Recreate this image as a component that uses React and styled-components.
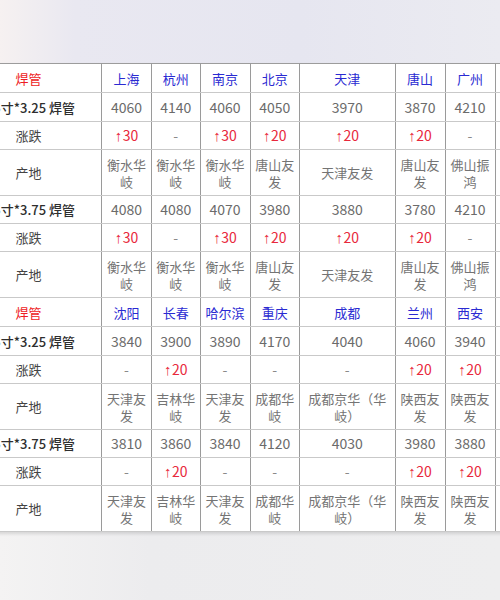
import React from "react";
import styled, { createGlobalStyle } from "styled-components";

const GlobalStyle = createGlobalStyle`
  html, body {
    margin: 0;
    padding: 0;
  }
  body {
    font-family: "Noto Sans CJK SC", "Noto Sans", sans-serif;
  }
`;

const Page = styled.div`
  width: 500px;
  height: 600px;
  overflow: hidden;
  display: flex;
  flex-direction: column;
  background: linear-gradient(90deg, #f4f3f3 0%, #ececee 30%, #eeeeef 100%);
`;

const Banner = styled.div`
  height: 63px;
  flex: none;
  background: linear-gradient(90deg, #f6f1f1 0%, #e9e8f1 15%, #e6e6f0 60%, #ebebf1 100%);
`;

const TableWrap = styled.div`
  flex: none;
  margin-left: -45px;
  box-shadow: 0 2px 3px rgba(0, 0, 0, 0.12);
  width: fit-content;
`;

const Table = styled.table`
  border-collapse: collapse;
  table-layout: fixed;
  background: #fff;
  border-top: 1px solid #9c9c9c;
  border-bottom: 1px solid #707070;
`;

const Row = styled.tr`
  height: ${p => p.$h}px;
`;

const Cell = styled.td`
  padding: 0 3px;
  text-align: center;
  vertical-align: middle;
  border-left: 1px solid #9a9a9a;
  border-right: 1px solid #9a9a9a;
  border-bottom: 1px solid #c9c9c9;
  font-size: 13px;
  line-height: 17px;
  color: #6a6a6a;
  overflow: hidden;
`;

const Label = styled(Cell)`
  color: ${p => (p.$strong ? "#2e2e2e" : "#444")};
  font-weight: ${p => (p.$strong ? 500 : 400)};
  white-space: nowrap;
`;

const Corner = styled(Cell)`
  color: #ee1c24;
  font-size: 13px;
`;

const City = styled(Cell)`
  color: #2a2ad2;
  white-space: nowrap;
`;

const Price = styled(Cell)`
  font-size: 14px;
  color: #6b6b6b;
`;

const Change = styled(Cell)`
  font-size: 14px;
  color: ${p => (p.$up ? "#e8283c" : "#8a8a8a")};
`;

const Arrow = styled.span`
  font-family: "Liberation Sans", sans-serif;
  font-size: 15px;
  margin-right: 0.5px;
`;

const Origin = styled(Cell)`
  color: #747474;
`;

const widths = [146, 50, 48.5, 50, 49.5, 95.5, 50, 50, 50];

const blocks = [
  {
    cities: ["上海", "杭州", "南京", "北京", "天津", "唐山", "广州", "武汉"],
    specs: [
      {
        label: "1.5寸*3.25 焊管",
        prices: ["4060", "4140", "4060", "4050", "3970", "3870", "4210", ""],
        changes: ["30", "", "30", "20", "20", "20", "", ""],
      },
      {
        label: "1.5寸*3.75 焊管",
        prices: ["4080", "4080", "4070", "3980", "3880", "3780", "4210", ""],
        changes: ["30", "", "30", "20", "20", "20", "", ""],
      },
    ],
    origins: ["衡水华岐", "衡水华岐", "衡水华岐", "唐山友发", "天津友发", "唐山友发", "佛山振鸿", ""],
  },
  {
    cities: ["沈阳", "长春", "哈尔滨", "重庆", "成都", "兰州", "西安", "昆明"],
    specs: [
      {
        label: "1.5寸*3.25 焊管",
        prices: ["3840", "3900", "3890", "4170", "4040", "4060", "3940", ""],
        changes: ["", "20", "", "", "", "20", "20", ""],
      },
      {
        label: "1.5寸*3.75 焊管",
        prices: ["3810", "3860", "3840", "4120", "4030", "3980", "3880", ""],
        changes: ["", "20", "", "", "", "20", "20", ""],
      },
    ],
    origins: ["天津友发", "吉林华岐", "天津友发", "成都华岐", "成都京华（华岐）", "陕西友发", "陕西友发", ""],
  },
];

const Block = ({ block }) => (
  <>
    <Row $h={29}>
      <Corner>焊管</Corner>
      {block.cities.map((c, i) => (
        <City key={i}>{i < 7 ? c : ""}</City>
      ))}
    </Row>
    {block.specs.map((spec, s) => (
      <React.Fragment key={s}>
        <Row $h={s === 0 ? 29 : 28}>
          <Label $strong>{spec.label}</Label>
          {spec.prices.map((p, i) => (
            <Price key={i}>{p}</Price>
          ))}
        </Row>
        <Row $h={28}>
          <Label>涨跌</Label>
          {spec.changes.map((c, i) =>
            i === 7 ? (
              <Change key={i} />
            ) : (
              <Change key={i} $up={!!c}>
                {c ? (
                  <>
                    <Arrow>↑</Arrow>
                    {c}
                  </>
                ) : (
                  "-"
                )}
              </Change>
            )
          )}
        </Row>
        <Row $h={46}>
          <Label>产地</Label>
          {block.origins.map((o, i) => (
            <Origin key={i}>{o}</Origin>
          ))}
        </Row>
      </React.Fragment>
    ))}
  </>
);

export default function App() {
  return (
    <>
      <GlobalStyle />
      <Page>
        <Banner />
        <TableWrap>
          <Table style={{ width: widths.reduce((a, b) => a + b, 0) }}>
            <colgroup>
              {widths.map((w, i) => (
                <col key={i} style={{ width: w }} />
              ))}
            </colgroup>
            <tbody>
              {blocks.map((b, i) => (
                <Block key={i} block={b} />
              ))}
            </tbody>
          </Table>
        </TableWrap>
      </Page>
    </>
  );
}
